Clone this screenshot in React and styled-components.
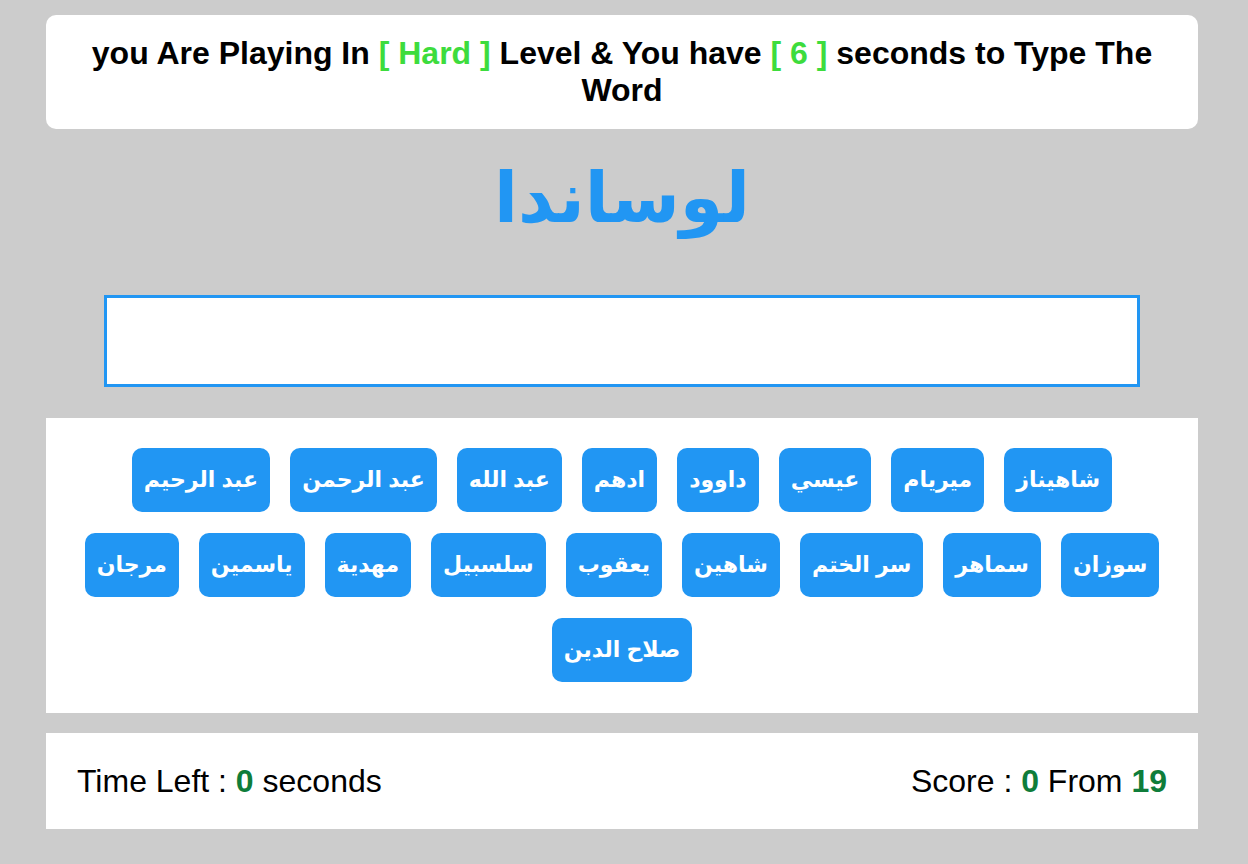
import React from "react";
import styled, { createGlobalStyle } from "styled-components";

const words = [
  ["عبد الرحيم", "عبد الرحمن", "عبد الله", "ادهم", "داوود", "عيسي", "ميريام", "شاهيناز"],
  ["مرجان", "ياسمين", "مهدية", "سلسبيل", "يعقوب", "شاهين", "سر الختم", "سماهر", "سوزان"],
  ["صلاح الدين"],
];

const App = () => {
  return (
    <>
      <GlobalStyle />
      <Page>
        <Message>
          you Are Playing In <Accent>[ Hard ]</Accent> Level &amp; You have{" "}
          <Accent>[ 6 ]</Accent> seconds to Type The Word
        </Message>
        <TheWord>لوساندا</TheWord>
        <InputWrap>
          <WordInput type="text" autoFocus />
        </InputWrap>
        <Upcoming>
          {words.map((row, i) => (
            <Row key={i}>
              {row.map((w) => (
                <WordTag key={w}>{w}</WordTag>
              ))}
            </Row>
          ))}
        </Upcoming>
        <Control>
          <span>
            Time Left : <Num>0</Num> seconds
          </span>
          <span>
            Score : <Num>0</Num> From <Num>19</Num>
          </span>
        </Control>
      </Page>
    </>
  );
};

export default App;

const GlobalStyle = createGlobalStyle`
  html, body {
    margin: 0;
    background-color: #cccccc;
  }
  body {
    padding-right: 4px;
    font-family: "Liberation Sans", "DejaVu Sans", Arial, sans-serif;
  }
`;

const Page = styled.div`
  width: 1152px;
  margin: 0 auto;
  padding-top: 15px;
`;

const Message = styled.div`
  background-color: white;
  border-radius: 10px;
  padding: 20px 30px;
  text-align: center;
  font-size: 32px;
  font-weight: bold;
  line-height: 37px;
  color: #000;
`;

const Accent = styled.span`
  color: #3ddc3d;
`;

const TheWord = styled.div`
  text-align: center;
  color: #2196f3;
  font-size: 70px;
  font-weight: bold;
  height: 166px;
  line-height: 138px;
`;

const InputWrap = styled.div`
  display: flex;
  justify-content: center;
`;

const WordInput = styled.input`
  width: 90%;
  height: 92px;
  box-sizing: border-box;
  border: 3px solid #2196f3;
  background: white;
  text-align: center;
  font-size: 30px;
  caret-color: #2196f3;
  outline: none;
`;

const Upcoming = styled.div`
  background-color: white;
  margin-top: 31px;
  padding: 30px 10px 31px;
  display: flex;
  flex-direction: column;
  gap: 21px;
`;

const Row = styled.div`
  display: flex;
  justify-content: center;
  gap: 20px;
`;

const WordTag = styled.span`
  background-color: #2196f3;
  color: white;
  font-size: 22px;
  font-weight: bold;
  height: 64px;
  padding: 0 12px;
  border-radius: 10px;
  display: flex;
  align-items: center;
  justify-content: center;
  white-space: nowrap;
`;

const Control = styled.div`
  background-color: white;
  margin-top: 20px;
  height: 96px;
  padding: 0 31px 0 31px;
  display: flex;
  justify-content: space-between;
  align-items: center;
  font-size: 32px;
  color: #000;
`;

const Num = styled.span`
  color: #0f7d3a;
  font-weight: bold;
`;
